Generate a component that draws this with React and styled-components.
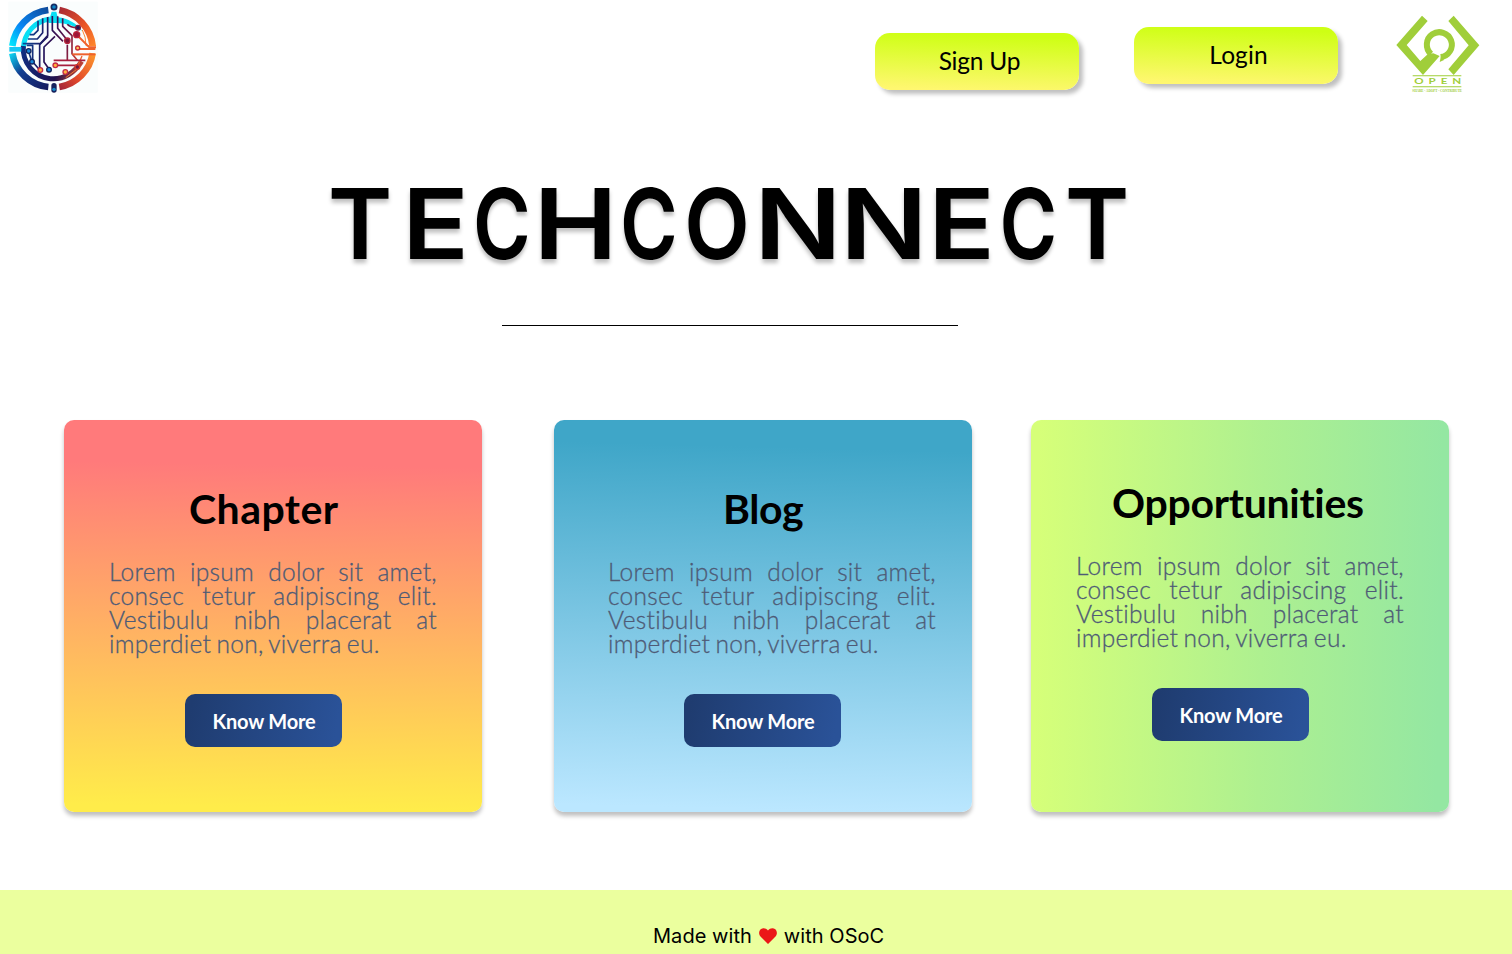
import React from 'react';
import styled, { createGlobalStyle } from 'styled-components';

const GlobalStyle = createGlobalStyle`
  *, *::before, *::after { box-sizing: border-box; }
  html, body { margin: 0; padding: 0; background: #fff; }
  body { overflow: hidden; }
`;

const Page = styled.div`
  width: 1512px;
  height: 954px;
  display: flex;
  flex-direction: column;
  background: #fff;
  color: #000;
  font-family: Lato, 'Open Sans', sans-serif;
`;

const Header = styled.header`
  display: flex;
  align-items: flex-start;
  height: 110px;
`;

const Logo = styled.svg`
  display: block;
  flex: none;
`;

const Actions = styled.nav`
  display: flex;
  align-items: flex-start;
  gap: 55px;
  margin-left: 765px;
  margin-right: 42px;
`;

const AuthButton = styled.button`
  width: 204px;
  height: 57px;
  margin-top: ${(p) => p.$top}px;
  padding: 0 0 2px ${(p) => p.$indent}px;
  border: 0;
  border-radius: 15px;
  background: linear-gradient(182deg, #ceff14 8%, #fff770 96%);
  box-shadow: 4px 4px 4px rgba(0, 0, 0, 0.25);
  color: #000;
  font: 400 24.5px/30px Lato, sans-serif;
  letter-spacing: ${(p) => p.$tracking}px;
`;

const Hero = styled.section`
  display: flex;
  flex-direction: column;
  padding-left: 331px;
  height: 310px;
`;

const Title = styled.h1`
  display: flex;
  margin: 65px 0 0;
  height: 98px;
  font: 600 98px/98px Inter, sans-serif;
  text-shadow: 0 4px 4px rgba(0, 0, 0, 0.25);
`;

const Letter = styled.span`
  display: flex;
  justify-content: center;
  width: ${(p) => p.$width}px;
  margin-right: ${(p) => p.$gap}px;
  transform: scaleX(${(p) => p.$stretch});
`;

const Rule = styled.hr`
  width: 456px;
  height: 1px;
  margin: 52px 0 0 171px;
  border: 0;
  background: #000;
`;

const Cards = styled.main`
  display: flex;
  padding-left: 64px;
  height: 470px;
`;

const Card = styled.article`
  display: flex;
  flex-direction: column;
  align-items: flex-start;
  width: 418px;
  height: 392px;
  margin-right: ${(p) => p.$gap}px;
  padding-top: ${(p) => p.$top}px;
  padding-left: ${(p) => p.$left}px;
  border-radius: 10px;
  background: ${(p) => p.$fill};
  box-shadow: 0 4px 4px rgba(0, 0, 0, 0.25);
`;

const CardTitle = styled.h2`
  margin: 0 0 0 ${(p) => p.$indent}px;
  font: 700 41px/50px Lato, sans-serif;
  font-variant-ligatures: none;
  letter-spacing: ${(p) => p.$tracking}px;
  white-space: nowrap;
`;

const CardText = styled.p`
  width: 328px;
  margin: 26px 0 0;
  color: #4e5b76;
  font: 300 24.5px/24px Lato, sans-serif;
  -webkit-text-stroke: 0.3px #4e5b76;
  letter-spacing: 0.3px;
`;

const TextLine = styled.span`
  display: block;
  white-space: nowrap;
  text-align: left;
  text-align-last: ${(p) => (p.$last ? 'left' : 'justify')};
  word-spacing: ${(p) => (p.$last ? -1.8 : 0)}px;
`;

const MoreButton = styled.button`
  width: 157px;
  height: 53px;
  margin: 38px 0 0 76px;
  padding: 0 0 0 1px;
  border: 0;
  border-radius: 10px;
  background: linear-gradient(99deg, #1f3c70 5%, #2a5298 95%);
  color: #fff;
  font: 700 20px/26px Lato, sans-serif;
  letter-spacing: -0.2px;
`;

const Footer = styled.footer`
  display: flex;
  align-items: center;
  height: 64px;
  padding: 28px 0 0 653px;
  background: #ebff9e;
  font: 400 20px/24px Inter, sans-serif;
  letter-spacing: 0.05px;
  white-space: nowrap;
`;

const Heart = styled.svg`
  display: block;
  margin: 0 7px 0 7px;
`;

const letters = [
  ['T', 58, 19, 1], ['E', 55, 14, 1.13], ['C', 50, 14, 0.8], ['H', 69, 14, 1.15],
  ['C', 50, 13, 0.8], ['O', 60, 15, 0.87], ['N', 72, 14, 1.18], ['N', 72, 14, 1.18],
  ['E', 55, 15, 1.13], ['C', 49, 15, 0.8], ['T', 58, 0, 1],
];

const lines = [
  'Lorem ipsum dolor sit amet,',
  'consec tetur adipiscing elit.',
  'Vestibulu nibh placerat at',
  'imperdiet non, viverra eu.',
];

const cards = [
  {
    title: 'Chapter', indent: 80, tracking: 0.45, top: 64, left: 45, gap: 72,
    fill: 'linear-gradient(181deg, #ff7a7b 12%, #ffec4a 98%)',
  },
  {
    title: 'Blog', indent: 115, tracking: -0.4, top: 64, left: 54, gap: 59,
    fill: 'linear-gradient(181.5deg, #3fa6c8 8%, #bbe7ff 98%)',
  },
  {
    title: 'Opportunities', indent: 36, tracking: -0.3, top: 58, left: 45, gap: 0,
    fill: 'linear-gradient(91deg, #d6ff79 2%, #aef090 55%, #94e7a2 97%)',
  },
];

const nodes = [
  [86, 153, 7, '#1685d9', '#10235d'], [96, 185, 7, '#1685d9', '#10235d'],
  [121, 210, 7, '#ffb13d', '#c52a45'], [147, 209, 7, '#1685d9', '#10235d'],
  [166, 196, 7, '#ffb13d', '#c52a45'], [196, 216, 7, '#ffb13d', '#c52a45'],
  [233, 144, 6, '#ffc75a', '#c52a34'], [202, 122, 8, '#7b1636', '#b5243c'],
  [230, 104, 9, '#9b1738', '#bd2035'], [234, 83, 7, '#1e1754', '#74163d'],
  [232, 201, 7, '#721741', '#d63a2d'],
];

function CircuitLogo() {
  return (
    <Logo width="110" height="100" viewBox="0 0 330 300" fill="none">
      <defs>
        <linearGradient id="cool" x1="30" y1="140" x2="145" y2="25" gradientUnits="userSpaceOnUse">
          <stop stopColor="#02efff" /><stop offset=".4" stopColor="#0787f5" /><stop offset="1" stopColor="#104b9b" />
        </linearGradient>
        <linearGradient id="warm" x1="175" y1="25" x2="290" y2="135" gradientUnits="userSpaceOnUse">
          <stop stopColor="#a62936" /><stop offset=".55" stopColor="#e85226" /><stop offset="1" stopColor="#ff892c" />
        </linearGradient>
        <linearGradient id="deep" x1="30" y1="155" x2="145" y2="270" gradientUnits="userSpaceOnUse">
          <stop stopColor="#09e2fa" /><stop offset=".4" stopColor="#123f92" /><stop offset="1" stopColor="#15195c" />
        </linearGradient>
        <linearGradient id="ember" x1="175" y1="270" x2="290" y2="160" gradientUnits="userSpaceOnUse">
          <stop stopColor="#9b2039" /><stop offset=".4" stopColor="#e2492b" /><stop offset="1" stopColor="#ff9c2d" />
        </linearGradient>
        <linearGradient id="core" x1="65" y1="165" x2="250" y2="220" gradientUnits="userSpaceOnUse">
          <stop stopColor="#102d80" /><stop offset=".6" stopColor="#21124e" /><stop offset="1" stopColor="#d94b31" />
        </linearGradient>
        <linearGradient id="trace" x1="70" y1="120" x2="250" y2="160" gradientUnits="userSpaceOnUse">
          <stop stopColor="#074c9c" /><stop offset=".4" stopColor="#251157" /><stop offset=".7" stopColor="#6b1546" /><stop offset="1" stopColor="#ef512c" />
        </linearGradient>
      </defs>
      <rect x="25" y="5" width="268" height="273" fill="#fafdfd" />
      <g strokeWidth="20">
        <path d="M37 138A124 124 0 0 1 145 30" stroke="url(#cool)" />
        <path d="M178 30A124 124 0 0 1 278 138" stroke="url(#warm)" />
        <path d="M37 160A122 122 0 0 0 145 261" stroke="url(#deep)" />
        <path d="M178 261A122 122 0 0 0 278 160" stroke="url(#ember)" />
      </g>
      <path d="M70 144A92 92 0 0 1 150 57" stroke="#08dff4" strokeWidth="15" />
      <path d="M150 52L155 35h14l4 17C205 55 229 70 247 94C224 77 197 69 171 69H145Z" fill="#08dff4" />
      <path d="M70 138A91 91 0 0 0 151 236Q208 241 245 184" stroke="url(#core)" strokeWidth="15" />
      <path d="M28 148H64" stroke="#15c8f5" strokeWidth="14" />
      <path d="M247 90Q258 110 258 137H288" stroke="#ff872e" strokeWidth="3" />
      <g stroke="url(#trace)" strokeWidth="5" strokeLinejoin="round">
        <path d="M114 62V91L101 104H89" /><path d="M128 55V98L112 117H84" />
        <path d="M143 51V107L121 131H68" /><path d="M80 136H98V185L119 210" />
        <path d="M144 109L119 134V206" /><path d="M165 109L132 141V186L147 207" />
        <path d="M157 48V91L189 124" /><path d="M173 49V85L202 121" />
        <path d="M188 55V79L216 107V161L232 181" /><path d="M202 134V180" />
        <path d="M85 153L96 185" /><path d="M202 73Q210 83 233 84" />
      </g>
      <g stroke="#ef622d" strokeWidth="6">
        <path d="M231 105L268 142H288" /><path d="M233 147H286" />
        <path d="M217 163H286" /><path d="M246 168L232 201" strokeWidth="4" />
      </g>
      <path d="M161 181H256M166 196H232" stroke="#a71f3e" strokeWidth="5" />
      <path d="M197 233L241 200" stroke="#f27b34" strokeWidth="3" />
      {nodes.map(([cx, cy, r, fill, stroke]) => (
        <circle key={`${cx}-${cy}`} cx={cx} cy={cy} r={r} fill={fill} stroke={stroke} strokeWidth="4" />
      ))}
      <circle cx="162" cy="21" r="8" fill="#0b84c8" stroke="#172d63" strokeWidth="5" />
      <rect x="154" y="249" width="16" height="29" rx="8" fill="#17225d" />
      <circle cx="162" cy="268" r="5" fill="#148dcc" />
    </Logo>
  );
}

function OpenLogo() {
  return (
    <Logo width="120" height="110" viewBox="0 0 360 330" fill="#a0ce3a">
      <path d="M126 47L143 63L80 135L121 183L144 162L160 160L179 168L129 225L49 135Z" />
      <path d="M153 162A37.5 37.5 0 1 1 182 171.3" fill="none" stroke="#a0ce3a" strokeWidth="18" />
      <path d="M179 186L184 165L192 180Z" />
      <path d="M221 47L298 136L221 225L205 208L266 136L205 63Z" />
      <path d="M98 226H244V229H98ZM98 259H244V262H98Z" />
      <text transform="translate(103 252) scale(1.45 1)" fontFamily="Lato, sans-serif" fontSize="24" fontWeight="700" textLength="97" lengthAdjust="spacing">OPEN</text>
      <text x="97" y="276" fontFamily="Liberation Serif, serif" fontSize="9" fontWeight="700" textLength="149" lengthAdjust="spacingAndGlyphs">SHARE - ADOPT - CONTRIBUTE</text>
    </Logo>
  );
}

export default function App() {
  return (
    <Page>
      <GlobalStyle />
      <Header>
        <CircuitLogo />
        <Actions>
          <AuthButton $top={33} $indent={5} $tracking={-0.2}>Sign Up</AuthButton>
          <AuthButton $top={27} $indent={5} $tracking={0.1}>Login</AuthButton>
        </Actions>
        <OpenLogo />
      </Header>
      <Hero>
        <Title>
          {letters.map(([char, width, gap, stretch], i) => (
            <Letter key={i} $width={width} $gap={gap} $stretch={stretch}>{char}</Letter>
          ))}
        </Title>
        <Rule />
      </Hero>
      <Cards>
        {cards.map((card) => (
          <Card key={card.title} $fill={card.fill} $top={card.top} $left={card.left} $gap={card.gap}>
            <CardTitle $indent={card.indent} $tracking={card.tracking}>{card.title}</CardTitle>
            <CardText>
              {lines.map((line, i) => (
                <TextLine key={line} $last={i === lines.length - 1}>{line}</TextLine>
              ))}
            </CardText>
            <MoreButton>Know More</MoreButton>
          </Card>
        ))}
      </Cards>
      <Footer>
        Made with
        <Heart width="18" height="16" viewBox="0 0 18 16" fill="#eb1717">
          <path d="M9 16L1.5 8.5C-.5 6.3-.2 3 1.7 1.3C3.8-.5 7-.2 9 2.4C11-.2 14.2-.5 16.3 1.3C18.2 3 18.5 6.3 16.5 8.5Z" />
        </Heart>
        with OSoC
      </Footer>
    </Page>
  );
}
